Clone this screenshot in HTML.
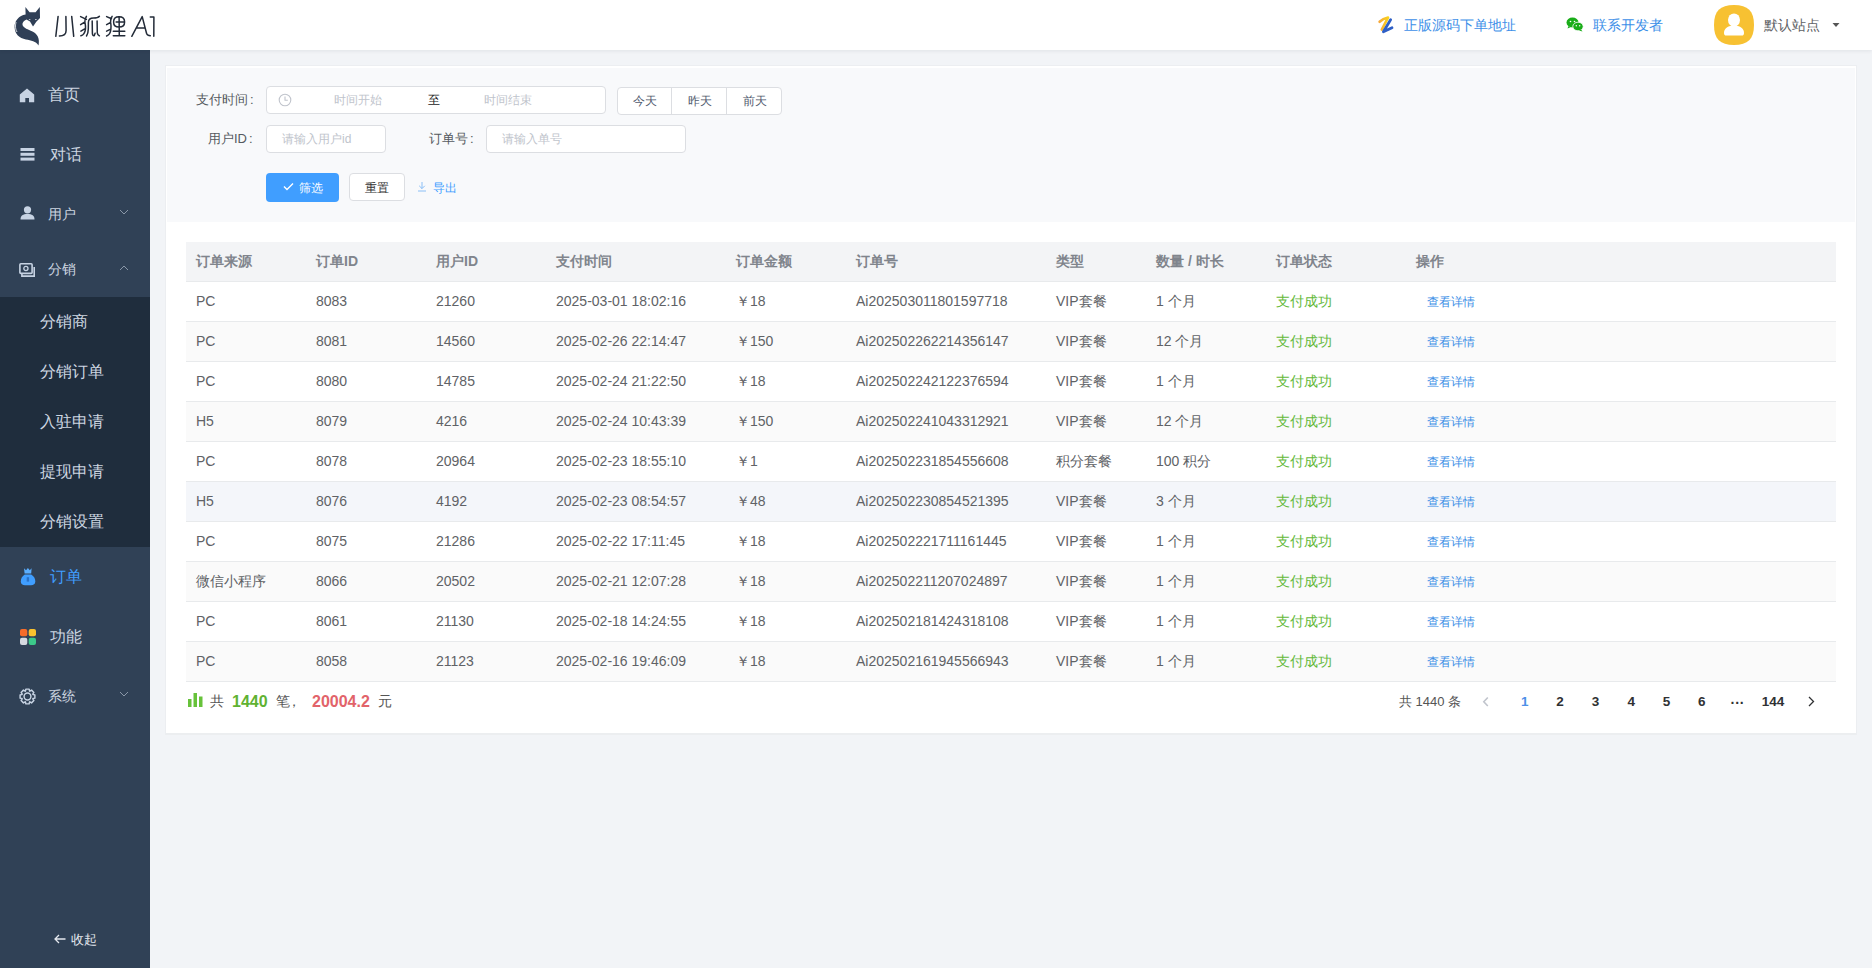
<!DOCTYPE html>
<html><head><meta charset="utf-8">
<style>
*{box-sizing:border-box;margin:0;padding:0}
html,body{width:1872px;height:968px;overflow:hidden}
body{font-family:"Liberation Sans",sans-serif;background:#f2f4f7;position:relative;color:#606266}
.abs{position:absolute}
#hdr{left:0;top:0;width:1872px;height:50px;background:#fff;box-shadow:0 1px 4px rgba(0,21,41,.08);z-index:5}
#side{left:0;top:50px;width:150px;height:918px;background:#304156}
.mi{position:absolute;left:0;width:150px;color:#cdd6e1;white-space:nowrap}
.mi .t{position:absolute;line-height:20px}
.sub{position:absolute;left:0;top:247px;width:150px;height:250px;background:#1f2d3d}
.chev{position:absolute;left:119px;width:10px;height:6px}
#card{left:165px;top:65px;width:1692px;height:670px;background:#fff;border:1px solid #eceef1;border-bottom:2px solid #eceef0}
#filter{left:167px;top:68px;width:1688px;height:154px;background:#f8f9fb}
.lbl{position:absolute;font-size:13px;color:#555a60;line-height:16px;text-align:right;white-space:nowrap}
.inp{position:absolute;background:#fff;border:1px solid #dcdee2;border-radius:4px;height:28px}
.ph{position:absolute;font-size:12px;color:#c0c4cc;line-height:14px;white-space:nowrap}
.btn{position:absolute;font-size:12px;line-height:14px;color:#515a6e;text-align:center;white-space:nowrap}
table{position:absolute;left:186px;top:242px;width:1650px;border-collapse:collapse;table-layout:fixed;font-size:14px}
th{height:39px;line-height:16px;background:#f3f4f6;color:#80848c;font-weight:bold;text-align:left;padding-left:10px;border-bottom:1px solid #e8eaec}
td{height:40px;line-height:16px;text-align:left;padding-left:10px;border-bottom:1px solid #e8eaec;color:#606266;white-space:nowrap}
tr.s td{background:#fafafa}
tr.h td{background:#f4f6fa}
.ok{color:#64b93a}
.lk{color:#3a8ee6;padding-left:21px;font-size:12px;padding-top:2px}
.pg{position:absolute;top:693px;font-size:13px;line-height:16px;white-space:nowrap}
</style></head><body>

<div id="hdr" class="abs">
  <!-- fox logo -->
  <svg class="abs" style="left:0;top:0" width="50" height="50" viewBox="0 0 50 50">
    <path fill="#2f3f56" d="M25.4 7 L29.6 12.3 L35.6 12.3 L39.8 7 L40 18 L36.5 21.5 L33 26.5 L30 21.5 L26.5 19.5 C24 20.5 22 22.5 22.5 25 C23.5 28 28 29.5 32.5 31.5 C37.5 34 40 38.5 38.5 45.5 C36 41 31 40.5 26 39.5 C19 38 15 34 14.6 27.5 C14.3 21 19 15.5 25.6 14.5 Z"/>
    <path fill="#fff" d="M28.5 19 L30.5 19.2 L30 20.3 Z M35 19.2 L37.2 19 L35.5 20.3 Z"/>
    <path fill="none" stroke="#fff" stroke-width="0.8" d="M16 22 C15 26 15.5 30 17 32"/>
  </svg>
  <svg class="abs" style="left:50px;top:8px" width="110" height="36" viewBox="0 0 110 36">
    <g fill="none" stroke="#232b38" stroke-width="1.5" stroke-linecap="round" stroke-linejoin="round">
      <path d="M8.1 8.4 L5.8 28.3"/>
      <path d="M15.9 8.4 L16.1 22.5 C16.1 26 14.5 28 9.4 28"/>
      <path d="M21.7 8.4 L23.7 28.3"/>
      <path d="M30.6 8.6 L36.4 11.4 M36.4 8.3 C35.5 10 34.7 11.5 34.9 13.8 C35.5 17 35.8 19 35.5 21 C35 25 33.5 27 30.9 27.8 M30.6 16.7 L35 13.8 M30.9 23.1 L34.7 20.8"/>
      <path d="M49.4 8.3 C48 10 46.5 10.1 43.5 10.1 C40 10.1 38.4 11.5 38.4 14.5 L38.3 21 C38.2 24.5 37.6 26.5 36.5 28"/>
      <path d="M42.2 13 L42.4 25.5 C42.5 27.5 43.5 28 44.3 27.5 L45.1 25.3"/>
      <path d="M47.1 13 L47.3 25 C47.5 26.5 48.5 27.3 49.4 27.8"/>
      <path d="M56.6 8.6 L61.5 10.8 M62.1 8.3 C61 10 60.4 11.5 60.6 13.5 C61 16.5 61.2 18.5 60.9 21 C60.6 24.5 59.5 27 56.6 28 M56.6 16.7 L60.7 14.4 M56.6 23.1 L60.7 21.1"/>
      <path d="M69 8.8 C65 8.8 63.6 11 63.6 14 C63.6 17 65 19.1 69 19.1 C73 19.1 74.6 17.2 74.6 14 C74.6 10.8 73 8.8 69 8.8 Z M66.1 14.1 L74.6 14.1 M69.1 8.8 L69.3 27.6 M63.3 23.2 L74.8 23.2 M63.3 27.7 L74.8 27.7"/>
      <path d="M81.8 28.3 L92.2 8.6 L96.6 25.5 C97.2 27 98.5 27.8 100.3 27.8 M87.3 19.9 L94.5 19.9"/>
      <path d="M100.3 8.9 L103.9 8.9 L103.8 28.3"/>
    </g>
  </svg>

  <!-- right links -->
  <svg class="abs" style="left:1376px;top:15px" width="20" height="20" viewBox="0 0 20 20">
    <defs><linearGradient id="zy" x1="0" y1="0" x2="1" y2="0"><stop offset="0" stop-color="#f7a93a"/><stop offset="1" stop-color="#f9d21c"/></linearGradient></defs>
    <path d="M3.6 6.8 C6 4.5 9 3.2 12 2.6 L5.8 14.6" fill="none" stroke="url(#zy)" stroke-width="2.6" stroke-linecap="round" stroke-linejoin="round"/>
    <path d="M14.6 4.8 L7.4 16.8 L16 12.8" fill="none" stroke="#2e5fc6" stroke-width="2.8" stroke-linecap="round" stroke-linejoin="round"/>
  </svg>
  <div class="abs" style="left:1404px;top:17px;font-size:14px;line-height:16px;color:#3d8fe8">正版源码下单地址</div>
  <svg class="abs" style="left:1566px;top:17px" width="18" height="15" viewBox="0 0 18 15">
    <ellipse cx="6.5" cy="5.5" rx="6" ry="5" fill="#1aad19"/>
    <path d="M2.5 9 L1.5 11.5 L5 10 Z" fill="#1aad19"/>
    <ellipse cx="12" cy="9.5" rx="5.2" ry="4.3" fill="#1aad19" stroke="#fff" stroke-width="0.8"/>
    <path d="M15 12.5 L16.5 14.5 L13 13.5 Z" fill="#1aad19"/>
    <circle cx="4.5" cy="4.5" r="0.8" fill="#fff"/><circle cx="8.5" cy="4.5" r="0.8" fill="#fff"/>
    <circle cx="10.3" cy="8.8" r="0.7" fill="#fff"/><circle cx="13.7" cy="8.8" r="0.7" fill="#fff"/>
  </svg>
  <div class="abs" style="left:1593px;top:17px;font-size:14px;line-height:16px;color:#3d8fe8">联系开发者</div>
  <svg class="abs" style="left:1714px;top:5px" width="40" height="40" viewBox="0 0 40 40">
    <path fill="#f7c132" d="M20 0 C34 0 40 6 40 20 C40 34 34 40 20 40 C6 40 0 34 0 20 C0 6 6 0 20 0 Z"/>
    <ellipse cx="20" cy="15" rx="6" ry="6.6" fill="#fff"/>
    <path fill="#fff" d="M10 28 C10 24 13 21.5 16.5 21 L23.5 21 C27 21.5 30 24 30 28 C30 30 29 30.5 28 30.5 L12 30.5 C11 30.5 10 30 10 28 Z"/>
  </svg>
  <div class="abs" style="left:1764px;top:17px;font-size:14px;line-height:16px;color:#606266">默认站点</div>
  <svg class="abs" style="left:1832px;top:23px" width="8" height="4" viewBox="0 0 8 4"><path d="M0.5 0 L7.5 0 L4 4 Z" fill="#555"/></svg>
</div>

<div id="side" class="abs">
  <div class="sub"></div>
  <!-- 首页 y 94 -->
  <svg class="abs" style="left:19px;top:38px" width="16" height="15" viewBox="0 0 16 15"><path fill="#c7d3e3" d="M8 0.4 L15.2 6.6 L15.2 14.3 L10 14.3 L10 10.1 L6.3 10.1 L6.3 14.3 L0.8 14.3 L0.8 6.6 Z"/></svg>
  <div class="mi" style="top:35px"><span class="t" style="left:48px;font-size:16px">首页</span></div>
  <!-- 对话 y 154 -->
  <svg class="abs" style="left:20px;top:98px" width="15" height="13" viewBox="0 0 15 13"><rect x="0.5" y="0" width="14" height="3" fill="#c7d3e3"/><rect x="0.5" y="4.8" width="14" height="3" fill="#c7d3e3"/><rect x="0.5" y="9.6" width="14" height="3" fill="#c7d3e3"/></svg>
  <div class="mi" style="top:95px"><span class="t" style="left:50px;font-size:16px">对话</span></div>
  <!-- 用户 y 213 -->
  <svg class="abs" style="left:20px;top:156px" width="15" height="14" viewBox="0 0 15 14"><circle cx="7.5" cy="3.8" r="3.6" fill="#c7d3e3"/><path fill="#c7d3e3" d="M0.5 13.5 C0.5 9.5 3 8 7.5 8 C12 8 14.5 9.5 14.5 13.5 Z"/></svg>
  <div class="mi" style="top:154px"><span class="t" style="left:48px;font-size:14px">用户</span></div>
  <svg class="chev" style="top:159px" viewBox="0 0 10 6"><path d="M1 1 L5 5 L9 1" fill="none" stroke="#8a97a8" stroke-width="1"/></svg>
  <!-- 分销 y 269 -->
  <svg class="abs" style="left:18px;top:212px" width="19" height="16" viewBox="0 0 19 16"><rect x="1.9" y="1.8" width="12.2" height="9.6" rx="1" fill="none" stroke="#c7d3e3" stroke-width="1.6"/><path d="M3.9 11.8 L3.9 14.1 L16.2 14.1 L16.2 5" fill="none" stroke="#c7d3e3" stroke-width="1.6"/><circle cx="7.9" cy="6.5" r="2.1" fill="none" stroke="#c7d3e3" stroke-width="1.3"/></svg>
  <div class="mi" style="top:209px"><span class="t" style="left:48px;font-size:14px">分销</span></div>
  <svg class="chev" style="top:215px" viewBox="0 0 10 6"><path d="M1 5 L5 1 L9 5" fill="none" stroke="#8a97a8" stroke-width="1"/></svg>
  <!-- sub items -->
  <div class="mi" style="top:262px"><span class="t" style="left:40px;font-size:16px">分销商</span></div>
  <div class="mi" style="top:312px"><span class="t" style="left:40px;font-size:16px">分销订单</span></div>
  <div class="mi" style="top:362px"><span class="t" style="left:40px;font-size:16px">入驻申请</span></div>
  <div class="mi" style="top:412px"><span class="t" style="left:40px;font-size:16px">提现申请</span></div>
  <div class="mi" style="top:462px"><span class="t" style="left:40px;font-size:16px">分销设置</span></div>
  <!-- 订单 y 576 -->
  <svg class="abs" style="left:20px;top:517px" width="16" height="19" viewBox="0 0 16 19"><path fill="#5aaeff" d="M4 1.2 L6 3.2 L7.9 1 L9.8 3.2 L11.6 1.2 L11.2 6.6 L4.6 6.6 Z"/><path fill="#409eff" d="M4.8 7.6 L11.2 7.6 C14 9.2 15.3 12 15.3 14.5 C15.3 17 13.5 18.2 11 18.2 L5 18.2 C2.5 18.2 0.8 17 0.8 14.5 C0.8 12 2 9.2 4.8 7.6 Z"/><rect x="6.7" y="10.2" width="2.4" height="4.4" fill="#2a72c8"/></svg>
  <div class="mi" style="top:517px;color:#409eff"><span class="t" style="left:50px;font-size:16px">订单</span></div>
  <!-- 功能 y 636 -->
  <svg class="abs" style="left:20px;top:579px" width="16" height="16" viewBox="0 0 16 16"><rect x="0" y="0" width="7.3" height="7.3" rx="2" fill="#f56c2a"/><rect x="8.7" y="0" width="7.3" height="7.3" rx="2" fill="#f9c12e"/><rect x="0" y="8.7" width="7.3" height="7.3" rx="2" fill="#d5d9e0"/><rect x="8.7" y="8.7" width="7.3" height="7.3" rx="2" fill="#3cc98a"/></svg>
  <div class="mi" style="top:577px"><span class="t" style="left:50px;font-size:16px">功能</span></div>
  <!-- 系统 y 695 -->
  <svg class="abs" style="left:18.5px;top:638px" width="17" height="17" viewBox="0 0 16.4 16.4"><g fill="none" stroke="#c7d3e3" stroke-width="1.4" stroke-linejoin="round"><path d="M13.44 6.23 L15.32 6.61 L15.32 9.79 L13.44 10.17 L13.30 10.51 L14.36 12.11 L12.11 14.36 L10.51 13.30 L10.17 13.44 L9.79 15.32 L6.61 15.32 L6.23 13.44 L5.89 13.30 L4.29 14.36 L2.04 12.11 L3.10 10.51 L2.96 10.17 L1.08 9.79 L1.08 6.61 L2.96 6.23 L3.10 5.89 L2.04 4.29 L4.29 2.04 L5.89 3.10 L6.23 2.96 L6.61 1.08 L9.79 1.08 L10.17 2.96 L10.51 3.10 L12.11 2.04 L14.36 4.29 L13.30 5.89 Z"/><circle cx="8.2" cy="8.2" r="3.3"/></g></svg>
  <div class="mi" style="top:636px"><span class="t" style="left:48px;font-size:14px">系统</span></div>
  <svg class="chev" style="top:641px" viewBox="0 0 10 6"><path d="M1 1 L5 5 L9 1" fill="none" stroke="#8a97a8" stroke-width="1"/></svg>
  <!-- collapse -->
  <svg class="abs" style="left:54px;top:884px" width="12" height="10" viewBox="0 0 12 10"><path d="M5 1 L1 5 L5 9 M1 5 L11.5 5" fill="none" stroke="#e4e8ee" stroke-width="1.3"/></svg>
  <div class="mi" style="top:880px;color:#e4e8ee"><span class="t" style="left:71px;font-size:13px">收起</span></div>
</div>

<div id="card" class="abs"></div>
<div id="filter" class="abs">
</div>

<!-- filter contents (absolute in page coords) -->
<div class="lbl" style="left:196px;top:92px">支付时间<span style="margin-left:2px">:</span></div>
<div class="inp" style="left:266px;top:86px;width:340px"></div>
<svg class="abs" style="left:278px;top:93px" width="14" height="14" viewBox="0 0 14 14"><circle cx="7" cy="7" r="5.8" fill="none" stroke="#c0c4cc" stroke-width="1.1"/><path d="M7 3.5 L7 7.2 L9.8 7.2" fill="none" stroke="#c0c4cc" stroke-width="1.1"/></svg>
<div class="ph" style="left:334px;top:93px">时间开始</div>
<div class="ph" style="left:428px;top:93px;color:#222;font-size:12px">至</div>
<div class="ph" style="left:484px;top:93px">时间结束</div>
<div class="inp" style="left:617px;top:87px;width:165px;height:28px"></div>
<div class="abs" style="left:671px;top:88px;width:1px;height:26px;background:#dcdee2"></div>
<div class="abs" style="left:726px;top:88px;width:1px;height:26px;background:#dcdee2"></div>
<div class="btn" style="left:617px;top:94px;width:55px">今天</div>
<div class="btn" style="left:672px;top:94px;width:55px">昨天</div>
<div class="btn" style="left:727px;top:94px;width:55px">前天</div>

<div class="lbl" style="left:208px;top:131px">用户ID<span style="margin-left:2px">:</span></div>
<div class="inp" style="left:266px;top:125px;width:120px"></div>
<div class="ph" style="left:282px;top:132px">请输入用户id</div>
<div class="lbl" style="left:429px;top:131px">订单号<span style="margin-left:2px">:</span></div>
<div class="inp" style="left:486px;top:125px;width:200px"></div>
<div class="ph" style="left:502px;top:132px">请输入单号</div>

<div class="abs" style="left:266px;top:173px;width:73px;height:29px;background:#409eff;border-radius:4px"></div>
<svg class="abs" style="left:283px;top:182px" width="11" height="9" viewBox="0 0 11 9"><path d="M1 4.5 L4 7.5 L10 1.5" fill="none" stroke="#fff" stroke-width="1.4"/></svg>
<div class="btn" style="left:299px;top:181px;color:#fff">筛选</div>
<div class="inp" style="left:349px;top:173px;width:56px;height:28px"></div>
<div class="btn" style="left:349px;top:181px;width:56px;color:#333">重置</div>
<svg class="abs" style="left:417px;top:181px" width="10" height="11" viewBox="0 0 10 11"><path d="M5 1 L5 7.5 M2.2 4.8 L5 7.6 L7.8 4.8 M1 10 L9 10" fill="none" stroke="#7fb8f5" stroke-width="0.9"/></svg>
<div class="btn" style="left:433px;top:181px;color:#409eff">导出</div>

<table>
<colgroup><col style="width:120px"><col style="width:120px"><col style="width:120px"><col style="width:180px"><col style="width:120px"><col style="width:200px"><col style="width:100px"><col style="width:120px"><col style="width:140px"><col></colgroup>
<tr><th>订单来源</th><th>订单ID</th><th>用户ID</th><th>支付时间</th><th>订单金额</th><th>订单号</th><th>类型</th><th>数量 / 时长</th><th>订单状态</th><th>操作</th></tr>
<tr><td>PC</td><td>8083</td><td>21260</td><td>2025-03-01 18:02:16</td><td>￥18</td><td>Ai202503011801597718</td><td>VIP套餐</td><td>1 个月</td><td class="ok">支付成功</td><td class="lk">查看详情</td></tr>
<tr class="s"><td>PC</td><td>8081</td><td>14560</td><td>2025-02-26 22:14:47</td><td>￥150</td><td>Ai202502262214356147</td><td>VIP套餐</td><td>12 个月</td><td class="ok">支付成功</td><td class="lk">查看详情</td></tr>
<tr><td>PC</td><td>8080</td><td>14785</td><td>2025-02-24 21:22:50</td><td>￥18</td><td>Ai202502242122376594</td><td>VIP套餐</td><td>1 个月</td><td class="ok">支付成功</td><td class="lk">查看详情</td></tr>
<tr class="s"><td>H5</td><td>8079</td><td>4216</td><td>2025-02-24 10:43:39</td><td>￥150</td><td>Ai202502241043312921</td><td>VIP套餐</td><td>12 个月</td><td class="ok">支付成功</td><td class="lk">查看详情</td></tr>
<tr><td>PC</td><td>8078</td><td>20964</td><td>2025-02-23 18:55:10</td><td>￥1</td><td>Ai202502231854556608</td><td>积分套餐</td><td>100 积分</td><td class="ok">支付成功</td><td class="lk">查看详情</td></tr>
<tr class="s h"><td>H5</td><td>8076</td><td>4192</td><td>2025-02-23 08:54:57</td><td>￥48</td><td>Ai202502230854521395</td><td>VIP套餐</td><td>3 个月</td><td class="ok">支付成功</td><td class="lk">查看详情</td></tr>
<tr><td>PC</td><td>8075</td><td>21286</td><td>2025-02-22 17:11:45</td><td>￥18</td><td>Ai202502221711161445</td><td>VIP套餐</td><td>1 个月</td><td class="ok">支付成功</td><td class="lk">查看详情</td></tr>
<tr class="s"><td>微信小程序</td><td>8066</td><td>20502</td><td>2025-02-21 12:07:28</td><td>￥18</td><td>Ai202502211207024897</td><td>VIP套餐</td><td>1 个月</td><td class="ok">支付成功</td><td class="lk">查看详情</td></tr>
<tr><td>PC</td><td>8061</td><td>21130</td><td>2025-02-18 14:24:55</td><td>￥18</td><td>Ai202502181424318108</td><td>VIP套餐</td><td>1 个月</td><td class="ok">支付成功</td><td class="lk">查看详情</td></tr>
<tr class="s"><td>PC</td><td>8058</td><td>21123</td><td>2025-02-16 19:46:09</td><td>￥18</td><td>Ai202502161945566943</td><td>VIP套餐</td><td>1 个月</td><td class="ok">支付成功</td><td class="lk">查看详情</td></tr>
</table>

<!-- summary -->
<svg class="abs" style="left:188px;top:693px" width="16" height="14" viewBox="0 0 16 14"><rect x="0" y="6" width="3.5" height="8" fill="#67c23a"/><rect x="5.5" y="0" width="3.5" height="14" fill="#67c23a"/><rect x="11" y="3.5" width="3.5" height="10.5" fill="#67c23a"/></svg>
<div class="pg" style="left:210px;color:#555;font-size:14px">共</div>
<div class="pg" style="left:232px;color:#5fb232;font-size:16px;font-weight:bold;top:694px">1440</div>
<div class="pg" style="left:276px;color:#555;font-size:14px">笔<span style="margin-left:-3px">，</span></div>
<div class="pg" style="left:312px;color:#e2636a;font-size:16px;font-weight:bold;top:694px">20004.2</div>
<div class="pg" style="left:378px;color:#555;font-size:14px">元</div>

<!-- pagination -->
<div class="pg" style="left:1399px;color:#555;font-size:13px;top:694px">共 1440 条</div>
<svg class="abs" style="left:1482px;top:696px" width="7" height="11" viewBox="0 0 7 11"><path d="M5.8 1.5 L1.8 5.8 L5.8 10" fill="none" stroke="#c0c4cc" stroke-width="1.6"/></svg>
<div class="pg" style="left:1504.7px;width:40px;text-align:center;color:#4d90e8;font-size:13.5px;font-weight:bold;top:694px">1</div>
<div class="pg" style="left:1540.0px;width:40px;text-align:center;color:#303133;font-size:13.5px;font-weight:bold;top:694px">2</div>
<div class="pg" style="left:1575.6px;width:40px;text-align:center;color:#303133;font-size:13.5px;font-weight:bold;top:694px">3</div>
<div class="pg" style="left:1611.3px;width:40px;text-align:center;color:#303133;font-size:13.5px;font-weight:bold;top:694px">4</div>
<div class="pg" style="left:1646.5px;width:40px;text-align:center;color:#303133;font-size:13.5px;font-weight:bold;top:694px">5</div>
<div class="pg" style="left:1681.8px;width:40px;text-align:center;color:#303133;font-size:13.5px;font-weight:bold;top:694px">6</div>
<div class="pg" style="left:1752.9px;width:40px;text-align:center;color:#303133;font-size:13.5px;font-weight:bold;top:694px">144</div>
<div class="pg" style="left:1717.5px;width:40px;text-align:center;top:695px;color:#303133;font-size:14px;font-weight:bold">···</div>
<svg class="abs" style="left:1808px;top:696px" width="7" height="11" viewBox="0 0 7 11"><path d="M1 1 L5.5 5.5 L1 10" fill="none" stroke="#303133" stroke-width="1.3"/></svg>

</body></html>
